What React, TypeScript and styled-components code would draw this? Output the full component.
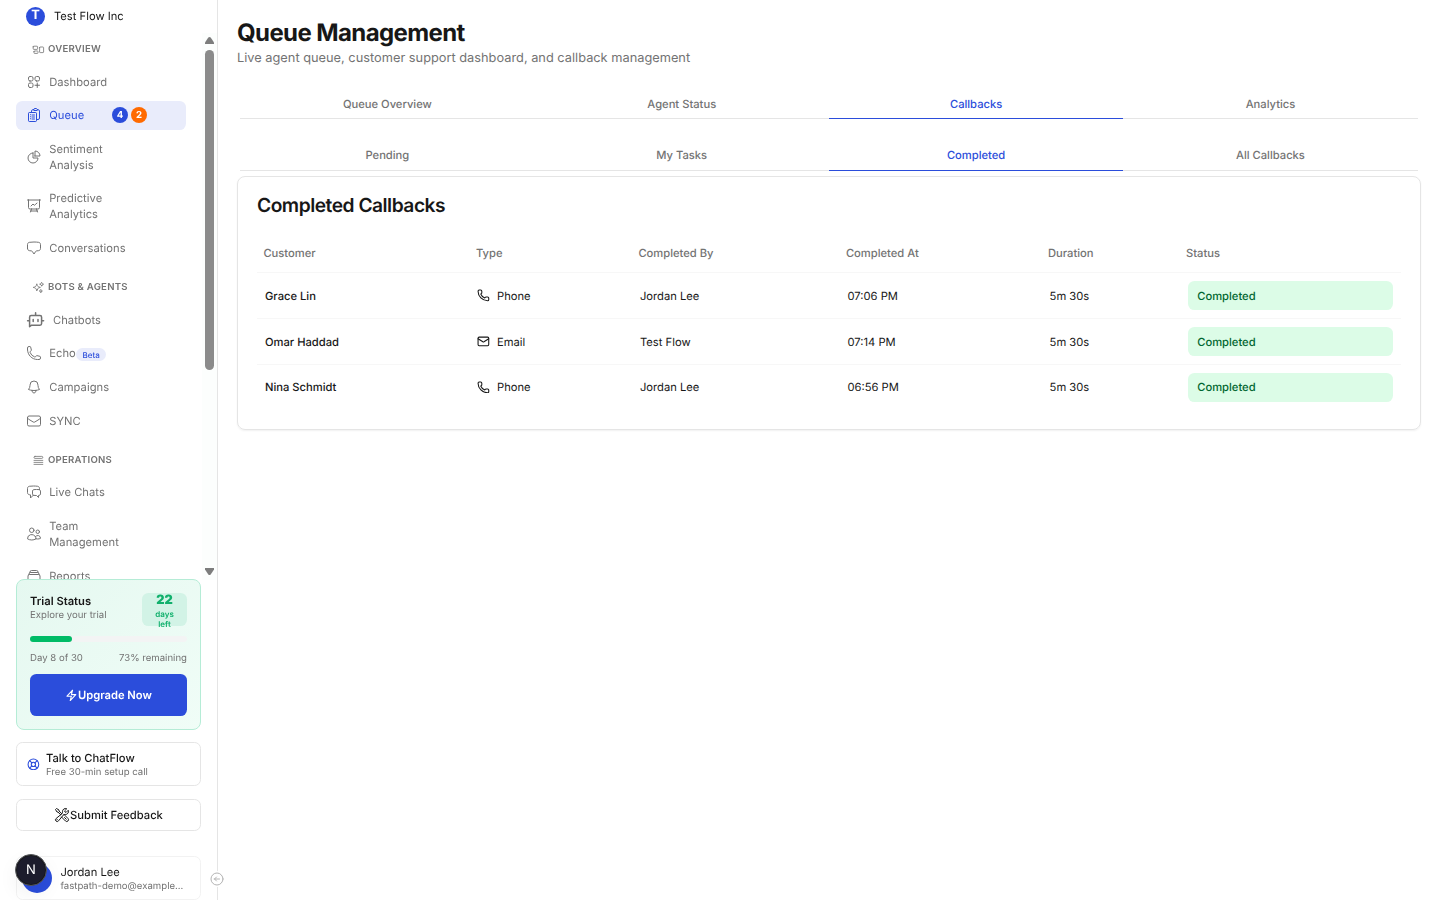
import React from "react";
import styled, { createGlobalStyle, css } from "styled-components";
import {
  HiOutlineRectangleGroup, HiOutlineSquaresPlus, HiOutlineClipboardDocumentList, HiOutlineChartPie,
  HiOutlinePresentationChartLine, HiOutlineChatBubbleBottomCenter, HiOutlineSparkles, HiOutlinePhone,
  HiOutlineBell, HiOutlineEnvelope, HiOutlineQueueList, HiOutlineChatBubbleLeftRight, HiOutlineUsers,
  HiOutlineRectangleStack, HiOutlineBolt, HiOutlineWrenchScrewdriver, HiOutlineArrowLeftCircle,
} from "react-icons/hi2";
import { LifeBuoy, Phone, Mail } from "lucide-react";

const color = {
  ink: "#171717",
  muted: "#737373",
  line: "#e5e5e5",
  blue: "#2b4ddb",
  blueSoft: "#e9ecfb",
  green: "#00bb66",
};

const Global = createGlobalStyle`
  * { box-sizing: border-box; }
  body { margin: 0; background: #fff; font-family: Inter, "Liberation Sans", sans-serif; color: ${color.ink}; overflow: hidden; text-rendering: geometricPrecision; }
  svg { display: block; flex: none; }
  h1, h2, p { margin: 0; }
  button { font: inherit; color: inherit; background: none; border: 0; padding: 0; text-rendering: inherit; }
`;

const Page = styled.div`
  display: flex;
  height: 900px;
  overflow: hidden;
`;

/* Sidebar */
const Sidebar = styled.aside`
  position: relative;
  width: 218px;
  flex: none;
  display: flex;
  flex-direction: column;
  border-right: 1px solid ${color.line};
  will-change: transform;
`;
const Brand = styled.div`
  height: 33px;
  flex: none;
  display: flex;
  align-items: center;
  gap: 9px;
  padding: 0 0 1px 26px;
  font-size: 11.2px;
`;
const BrandMark = styled.div`
  width: 19px;
  height: 19px;
  border-radius: 50%;
  background: ${color.blue};
  color: #fff;
  font-size: 12.8px;
  line-height: 18.6px;
  font-weight: 700;
  text-align: center;
`;
const NavScroll = styled.div`
  height: 547px;
  flex: none;
  display: flex;
  overflow: hidden;
`;
const NavList = styled.nav`
  flex: 1;
  padding: 8.5px 16px 0;
`;
const ScrollTrack = styled.div`
  width: 15px;
  height: 547px;
  flex: none;
  background: #fcfefd;
  display: flex;
  flex-direction: column;
  align-items: center;
  padding: 4px 0 5px;
`;
const ScrollThumb = styled.div`
  width: 9px;
  height: 320px;
  margin: 6px 0 auto;
  border-radius: 5px;
  background: #8b8b8b;
`;
const Section = styled.div`
  & + & { margin-top: 17.45px; }
`;
const SectionTitle = styled.div`
  display: flex;
  align-items: center;
  gap: 3.2px;
  height: 16px;
  margin: 0 0 9.7px;
  padding-left: 16px;
  color: ${color.muted};
  font-size: 9.6px;
  font-weight: 600;
  letter-spacing: 0.24px;
`;
const Items = styled.div`
  display: flex;
  flex-direction: column;
  gap: 4.8px;
`;
const Item = styled.a<{ $active?: boolean; $gap?: number }>`
  display: flex;
  align-items: center;
  gap: ${(p) => p.$gap ?? 7.2}px;
  width: 170px;
  padding: 6.4px 10px;
  border-radius: 6.4px;
  font-size: 11.2px;
  line-height: 16px;
  letter-spacing: 0.04px;
  color: ${color.muted};
  ${(p) => p.$active && css`
    background: ${color.blueSoft};
    color: ${color.blue};
  `}
  > svg { margin: -4px 0; }
`;
const ItemLabel = styled.span<{ $narrow?: boolean }>`
  ${(p) => p.$narrow && css`width: 74px;`}
`;
const Counts = styled.span`
  display: flex;
  gap: 3.2px;
  margin-left: 20.5px;
`;
const Count = styled.span<{ $bg: string }>`
  width: 16px;
  height: 16px;
  border-radius: 50%;
  background: ${(p) => p.$bg};
  color: #fff;
  font-size: 9.6px;
  line-height: 17px;
  font-weight: 700;
  text-align: center;
`;
const Beta = styled.span`
  margin: 3px 0 0 -6.5px;
  padding: 0 6px;
  height: 13px;
  line-height: 14px;
  border-radius: 7px;
  background: ${color.blueSoft};
  color: ${color.blue};
  font-size: 8px;
  font-weight: 500;
`;

const Small = styled.div`
  font-size: 9.6px;
  line-height: 13px;
  color: ${color.muted};
`;
const Trial = styled.section`
  width: 185px;
  height: 151px;
  flex: none;
  margin: -1px 0 0 16px;
  z-index: 1;
  padding: 13px 13px;
  border: 1px solid #b5ecd6;
  border-radius: 8px;
  background: linear-gradient(135deg, #e5f8f0, #f0fdf7);
`;
const TrialHead = styled.div`
  display: flex;
  justify-content: space-between;
  height: 33px;
`;
const TrialTitle = styled.div`
  font-size: 11.2px;
  font-weight: 600;
  line-height: 16px;
`;
const DaysLeft = styled.div`
  width: 45px;
  height: 33px;
  border-radius: 6.4px;
  background: #d2f3e6;
  color: #10b06c;
  text-align: center;
  font-size: 8px;
  font-weight: 600;
  line-height: 10px;
  b { display: block; font-size: 12.8px; line-height: 15.6px; margin-bottom: 0.4px; }
`;
const Bar = styled.div`
  height: 6px;
  margin-top: 10px;
  border-radius: 3px;
  background: #f3f4f4;
`;
const BarFill = styled.div`
  width: 42px;
  height: 6px;
  border-radius: 3px;
  background: ${color.green};
`;
const TrialMeta = styled.div`
  display: flex;
  justify-content: space-between;
  margin-top: 10px;
`;
const Upgrade = styled.button`
  display: flex;
  align-items: center;
  justify-content: center;
  width: 157px;
  height: 42px;
  margin-top: 9px;
  border-radius: 6.4px;
  background: ${color.blue};
  color: #fff;
  font-size: 11.2px;
  font-weight: 600;
  svg { stroke-width: 2; }
`;
const Outlined = styled.button<{ $h: number; $top: number; $faint?: boolean; $center?: boolean }>`
  display: flex;
  align-items: center;
  justify-content: ${(p) => (p.$center ? "center" : "flex-start")};
  width: 185px;
  height: ${(p) => p.$h}px;
  flex: none;
  margin: ${(p) => p.$top}px 0 0 16px;
  border: 1px solid ${(p) => (p.$faint ? "#f2f2f2" : color.line)};
  border-radius: 6.4px;
  text-align: left;
  font-size: 11.2px;
  font-weight: ${(p) => (p.$faint ? 400 : 500)};
`;
const TwoLines = styled.div<{ $left: number }>`
  margin-left: ${(p) => p.$left}px;
  line-height: 14px;
  ${Small} {
    margin: 1.4px 0 -1.4px;
    font-weight: 400;
  }
`;
const HelpIcon = styled.span`
  margin-left: 9.8px;
  color: ${color.blue};
`;
const Avatar = styled.span`
  width: 30px;
  height: 30px;
  margin-left: 5px;
  border-radius: 50%;
  background: ${color.blue};
`;
const DevBadge = styled.div`
  position: absolute;
  left: 15px;
  top: 854px;
  width: 32px;
  height: 32px;
  z-index: 2;
  border-radius: 50%;
  background: #1c1c2c;
  border: 1px solid #55575a;
  box-shadow: 0 0 0 1px #171717 inset, 0 8px 20px rgba(0, 0, 0, 0.06);
  color: #fff;
  font-size: 13px;
  line-height: 31px;
  text-align: center;
`;
const Collapse = styled.button`
  position: absolute;
  left: 209px;
  top: 871px;
  border-radius: 50%;
  background: #fff;
  color: #b4b4b4;
`;

/* Main */
const Main = styled.main`
  flex: 1;
  padding: 19px 19.2px 0 19px;
`;
const Title = styled.h1`
  font-size: 24px;
  line-height: 28px;
  font-weight: 700;
  letter-spacing: -0.6px;
`;
const Subtitle = styled.p`
  && { margin: 1.8px 0 -0.8px; }
  font-size: 12.8px;
  line-height: 19px;
  color: ${color.muted};
`;
const Tabs = styled.div<{ $top: number; $h: number }>`
  display: grid;
  grid-template-columns: repeat(4, 1fr);
  height: ${(p) => p.$h}px;
  margin: ${(p) => p.$top}px 3.2px 0;
`;
const Tab = styled.button<{ $active?: boolean; $low?: boolean }>`
  padding: ${(p) => (p.$low ? "1px 0 0" : "0 0 1px")};
  border-bottom: 1px solid ${(p) => (p.$active ? color.blue : color.line)};
  color: ${(p) => (p.$active ? color.blue : color.muted)};
  font-size: 11.2px;
  font-weight: 500;
`;
const Card = styled.section`
  margin-top: 5px;
  height: 254px;
  padding: 18px 19px;
  border: 1px solid ${color.line};
  border-radius: 8px;
  box-shadow: 0 1px 2px rgba(0, 0, 0, 0.06);
`;
const CardTitle = styled.h2`
  font-size: 19.2px;
  line-height: 20px;
  font-weight: 600;
  letter-spacing: -0.48px;
`;
const Status = styled.span`
  flex: 1;
  height: 29px;
  padding-left: 9.6px;
  line-height: 30px;
  border-radius: 6.4px;
  background: #dcfce7;
  color: #016630;
  font-weight: 500;
`;
const Row = styled.div<{ $head?: boolean }>`
  display: grid;
  grid-template-columns: 212.6px 162.4px 207.5px 202.1px 138px 1fr;
  align-items: center;
  height: ${(p) => (p.$head ? 39 : 46)}px;
  margin-top: ${(p) => (p.$head ? 19 : 0)}px;
  border-bottom: 1px solid #f7f7f7;
  font-size: 11.2px;
  ${(p) => p.$head && css`color: ${color.muted}; font-weight: 500; padding-bottom: 1px;`}
  &:last-child {
    border-bottom: 0;
    height: 44.2px;
    ${Status} { line-height: 28.6px; }
  }
`;
const Cell = styled.div<{ $head?: boolean; $strong?: boolean }>`
  display: flex;
  align-items: center;
  gap: 7.2px;
  padding: 0 7.4px 0 ${(p) => (p.$head ? 6.4 : 8)}px;
  font-weight: ${(p) => (p.$head || p.$strong ? 500 : 400)};
  > svg { margin-left: -0.6px; }
`;

const BotIcon = ({ size }: { size: number }) => (
  <svg width={size} height={size} viewBox="0 0 24 24" fill="none" stroke="currentColor" strokeWidth="1.9" strokeLinecap="round" strokeLinejoin="round">
    <path d="M12 3.5V7M4.5 20.8V9a2 2 0 0 1 2-2h11a2 2 0 0 1 2 2v8a2 2 0 0 1-2 2H7zM2 13.5h2.5M19.5 13.5H22M9 12v2.5M15 12v2.5" />
  </svg>
);

const sections = [
  {
    title: "OVERVIEW", icon: HiOutlineRectangleGroup, items: [
      { label: "Dashboard", icon: HiOutlineSquaresPlus },
      { label: "Queue", icon: HiOutlineClipboardDocumentList, active: true },
      { label: "Sentiment Analysis", icon: HiOutlineChartPie, narrow: true },
      { label: "Predictive Analytics", icon: HiOutlinePresentationChartLine, narrow: true },
      { label: "Conversations", icon: HiOutlineChatBubbleBottomCenter },
    ],
  },
  {
    title: "BOTS & AGENTS", icon: HiOutlineSparkles, items: [
      { label: "Chatbots", icon: BotIcon, size: 19.2, gap: 7.8 },
      { label: "Echo", icon: HiOutlinePhone, beta: true },
      { label: "Campaigns", icon: HiOutlineBell },
      { label: "SYNC", icon: HiOutlineEnvelope },
    ],
  },
  {
    title: "OPERATIONS", icon: HiOutlineQueueList, items: [
      { label: "Live Chats", icon: HiOutlineChatBubbleLeftRight },
      { label: "Team Management", icon: HiOutlineUsers, narrow: true },
      { label: "Reports", icon: HiOutlineRectangleStack },
    ],
  },
] as { title: string; icon: any; items: { label: string; icon: any; active?: boolean; narrow?: boolean; beta?: boolean; size?: number; gap?: number }[] }[];

const callbacks = [
  ["Grace Lin", "Phone", "Jordan Lee", "07:06 PM"],
  ["Omar Haddad", "Email", "Test Flow", "07:14 PM"],
  ["Nina Schmidt", "Phone", "Jordan Lee", "06:56 PM"],
];

const Arrow = ({ down }: { down?: boolean }) => (
  <svg width="9" height="7" viewBox="0 0 9 7" fill="#7d7d7d">
    <path d={down ? "M0 0h9v1.5L5.7 6.4q-1.2 1.2-2.4 0L0 1.5z" : "M0 7h9V5.5L5.7.6Q4.5-.6 3.3.6L0 5.5z"} />
  </svg>
);

const TabBar = ({ labels, top, height, low }: { labels: string[]; top: number; height: number; low?: boolean }) => (
  <Tabs $top={top} $h={height}>
    {labels.map((l, i) => <Tab key={l} $active={i === 2} $low={low}>{l}</Tab>)}
  </Tabs>
);

export default function App() {
  return (
    <Page>
      <Global />
      <Sidebar>
        <Brand><BrandMark>T</BrandMark>Test Flow Inc</Brand>
        <NavScroll>
          <NavList>
            {sections.map((s) => (
              <Section key={s.title}>
                <SectionTitle><s.icon size={12.8} />{s.title}</SectionTitle>
                <Items>
                  {s.items.map((it) => (
                    <Item key={it.label} $active={it.active} $gap={it.gap}>
                      <it.icon size={it.size ?? 16} />
                      <ItemLabel $narrow={it.narrow}>{it.label}</ItemLabel>
                      {it.active && <Counts><Count $bg={color.blue}>4</Count><Count $bg="#ff6a00">2</Count></Counts>}
                      {it.beta && <Beta>Beta</Beta>}
                    </Item>
                  ))}
                </Items>
              </Section>
            ))}
          </NavList>
          <ScrollTrack><Arrow /><ScrollThumb /><Arrow down /></ScrollTrack>
        </NavScroll>
        <Trial>
          <TrialHead>
            <div><TrialTitle>Trial Status</TrialTitle><Small>Explore your trial</Small></div>
            <DaysLeft><b>22</b>days<br />left</DaysLeft>
          </TrialHead>
          <Bar><BarFill /></Bar>
          <TrialMeta><Small>Day 8 of 30</Small><Small>73% remaining</Small></TrialMeta>
          <Upgrade><HiOutlineBolt size={12.8} />Upgrade Now</Upgrade>
        </Trial>
        <Outlined $h={44} $top={12}>
          <HelpIcon><LifeBuoy size={12.8} /></HelpIcon>
          <TwoLines $left={6.4}>Talk to ChatFlow<Small>Free 30-min setup call</Small></TwoLines>
        </Outlined>
        <Outlined $h={32} $top={13} $center><HiOutlineWrenchScrewdriver size={16} />Submit Feedback</Outlined>
        <Outlined $h={44} $top={25} $faint>
          <Avatar />
          <TwoLines $left={8.4}>Jordan Lee<Small>fastpath-demo@example...</Small></TwoLines>
        </Outlined>
        <DevBadge>N</DevBadge>
        <Collapse><HiOutlineArrowLeftCircle size={16} /></Collapse>
      </Sidebar>
      <Main>
        <Title>Queue Management</Title>
        <Subtitle>Live agent queue, customer support dashboard, and callback management</Subtitle>
        <TabBar labels={["Queue Overview", "Agent Status", "Callbacks", "Analytics"]} top={22} height={30} low />
        <TabBar labels={["Pending", "My Tasks", "Completed", "All Callbacks"]} top={21} height={31} />
        <Card>
          <CardTitle>Completed Callbacks</CardTitle>
          <Row $head>
            {["Customer", "Type", "Completed By", "Completed At", "Duration", "Status"].map((h) => <Cell key={h} $head>{h}</Cell>)}
          </Row>
          {callbacks.map(([name, type, by, at]) => (
            <Row key={name}>
              <Cell $strong>{name}</Cell>
              <Cell>{type === "Phone" ? <Phone size={12.8} /> : <Mail size={12.8} />}{type}</Cell>
              <Cell>{by}</Cell>
              <Cell>{at}</Cell>
              <Cell>5m 30s</Cell>
              <Cell><Status>Completed</Status></Cell>
            </Row>
          ))}
        </Card>
      </Main>
    </Page>
  );
}
